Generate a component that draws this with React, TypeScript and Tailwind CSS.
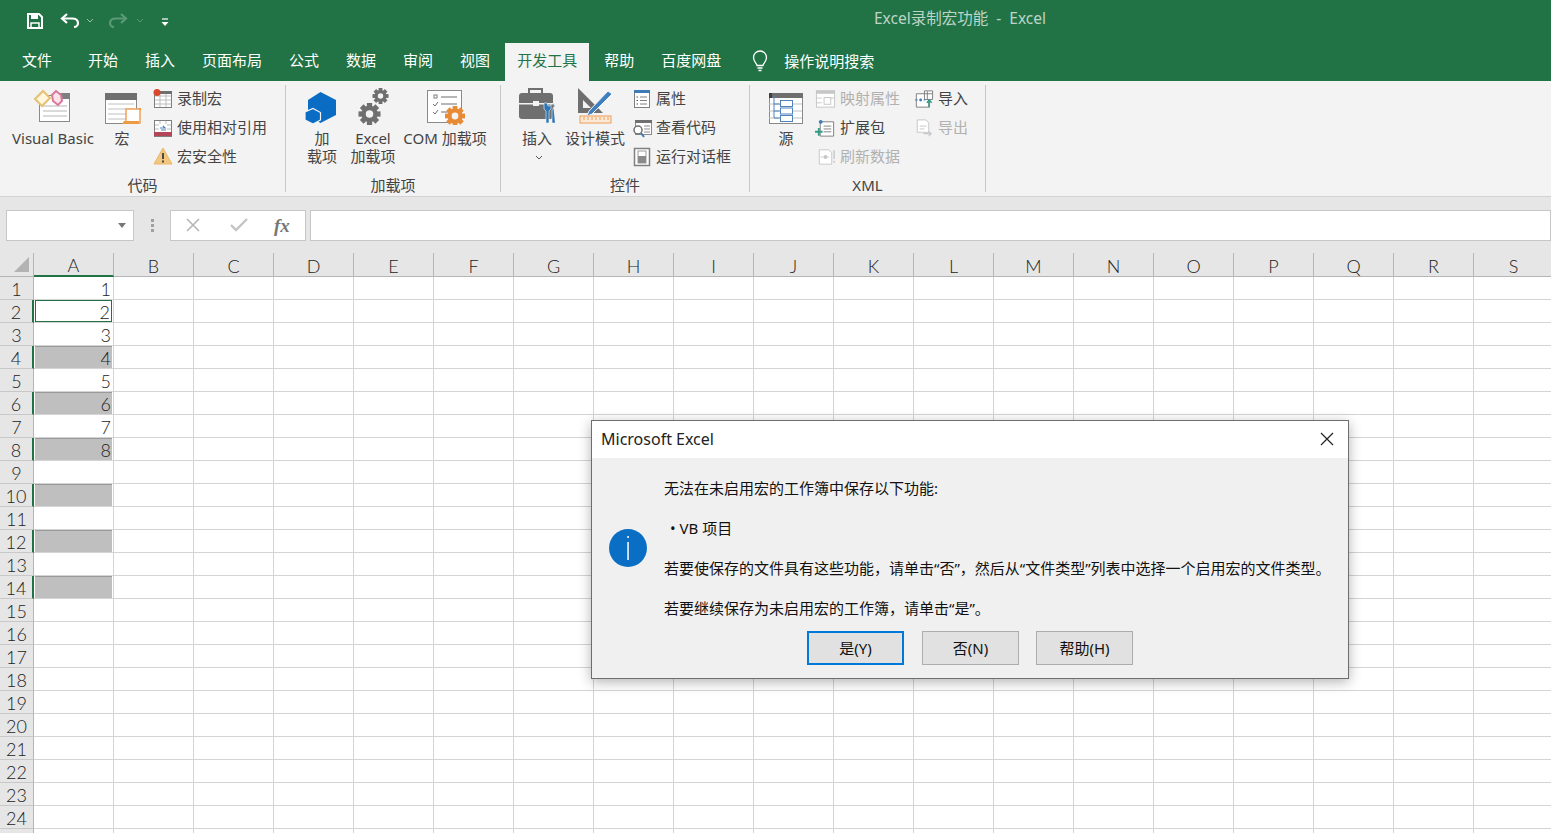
import React from 'react';

const tabs = ['开始', '插入', '页面布局', '公式', '数据', '审阅', '视图'];
const columns = 'ABCDEFGHIJKLMNOPQRS'.split('');
const rows = Array.from({ length: 25 }, (_, i) => i + 1);

const VisualBasicIcon = () => (
  <svg width="40" height="36" viewBox="0 0 40 36">
    <rect x="6.5" y="6.5" width="30" height="26" fill="#fff" stroke="#8a8a8a" />
    <rect x="23" y="4" width="14" height="6" fill="#7f7f7f" />
    <path d="M10 17h24M10 22h24M10 27h24" stroke="#b5b5b5" strokeWidth="1" />
    <path d="M2 10 10 2l7 7-8 8z" fill="#fff6dc" stroke="#e3c274" strokeWidth="2" />
    <path d="M19 6l4-4 5 4 1 6-4 4-5-4z" fill="#fbe3ea" stroke="#d9789b" strokeWidth="2" />
  </svg>
);

const MacroIcon = () => (
  <svg width="40" height="40" viewBox="-2 -7 40 40">
    <rect x="1.5" y="1.5" width="31" height="30" fill="#fff" stroke="#8a8a8a" />
    <rect x="1" y="1" width="32" height="7" fill="#6f6f6f" />
    <path d="M4 12h26M4 17h26M4 22h26M4 27h26" stroke="#c0c0c0" />
    <path d="M22 17h14v14H22z" fill="#fff" stroke="#f0a35a" strokeWidth="1.5" />
    <path d="M18 32h17v-3H20z" fill="#ed9a45" />
    <path d="M34 16h3v3z" fill="#ed9a45" />
  </svg>
);

const SmallSheet = ({ children }: { children?: React.ReactNode }) => (
  <svg width="20" height="20" viewBox="0 0 20 20">
    <rect x="1.5" y="2.5" width="17" height="16" fill="#fff" stroke="#7f7f7f" />
    <path d="M2 7h16M2 11h16M2 15h16M7 3v15M13 3v15" stroke="#bdbdbd" />
    {children}
  </svg>
);

const RecordIcon = () => (
  <SmallSheet>
    <rect x="1" y="2" width="18" height="3" fill="#6f6f6f" />
    <circle cx="4" cy="3.5" r="3.5" fill="#d9472b" />
  </SmallSheet>
);

const RelativeIcon = () => (
  <SmallSheet>
    <rect x="1" y="14" width="18" height="4" fill="#b4465a" />
    <rect x="6" y="6" width="8" height="8" fill="#fff" />
    <path d="M7 10h5l-2-2M13 12H8" stroke="#4f81bd" strokeWidth="1.2" fill="none" />
  </SmallSheet>
);

const WarnIcon = () => (
  <svg width="20" height="20" viewBox="0 0 20 20">
    <path d="M10 1 19 17H1z" fill="#f2c77f" stroke="#eab768" />
    <path d="M9 6h2v6H9zM9 13.5h2v2H9z" fill="#4a4a4a" />
  </svg>
);

const AddinIcon = () => (
  <svg width="34" height="34" viewBox="0 0 34 34">
    <path d="M15.5 1 31 9v15l-15.500 8L3 24V9z" fill="#0b6cc4" />
    <path d="M0 21l8-3.500 7.500 4V29L8 33l-8-4z" fill="#0b6cc4" stroke="#f3f3f3" strokeWidth="1.2" />
  </svg>
);

const Gear = ({ cx, cy, r, color }: { cx: number; cy: number; r: number; color: string }) => (
  <g>
    <circle cx={cx} cy={cy} r={r * 0.74} fill={color} />
    {[0, 45, 90, 135].map((a) => (
      <rect
        key={a}
        x={cx - r * 0.24}
        y={cy - r}
        width={r * 0.48}
        height={r * 2}
        fill={color}
        transform={`rotate(${a} ${cx} ${cy})`}
      />
    ))}
    <circle cx={cx} cy={cy} r={r * 0.34} fill="#f3f3f3" />
  </g>
);

const ExcelAddinIcon = () => (
  <svg width="34" height="38" viewBox="0 0 34 38">
    <Gear cx={24.5} cy={9} r={8} color="#6f6f6f" />
    <Gear cx={13.5} cy={27} r={11} color="#6f6f6f" />
  </svg>
);

const ComIcon = () => (
  <svg width="40" height="38" viewBox="0 0 40 38">
    <rect x="2.5" y="3.5" width="34" height="32" fill="#fff" stroke="#8a8a8a" />
    <rect x="9" y="8" width="3" height="3" fill="none" stroke="#7f7f7f" />
    <path d="M16 10h16M16 17h16M16 25h8M8 17l2 2 3-4M8 25l2 2 3-4" stroke="#6f6f6f" fill="none" />
    <Gear cx={30} cy={29} r={10} color="#e98a34" />
  </svg>
);

const InsertIcon = () => (
  <svg width="38" height="38" viewBox="0 0 38 38">
    <path d="M11 6V2h13v4" fill="none" stroke="#6f6f6f" strokeWidth="2" />
    <rect x="1" y="6" width="34" height="26" rx="3" fill="#6f6f6f" />
    <rect x="1" y="16" width="14" height="1.5" fill="#f3f3f3" />
    <rect x="21" y="16" width="14" height="1.5" fill="#f3f3f3" />
    <rect x="15" y="14" width="6" height="5" fill="#f3f3f3" />
    <path d="M26 16v6l2 2v12h3V24l2-2v-6l-1 3h-2l-1-3zM35 16l2 3-3 4v13h3" fill="#2e75b6" stroke="#f3f3f3" strokeWidth="0.6" />
  </svg>
);

const DesignIcon = () => (
  <svg width="38" height="38" viewBox="0 0 38 38">
    <path d="M2 1v25h25z" fill="#6f6f6f" />
    <path d="M7 13v8h8z" fill="#f3f3f3" />
    <path d="M13 24 32 4l4 3-20 20-5 2z" fill="#3e7fc1" stroke="#f3f3f3" strokeWidth="1" />
    <rect x="4" y="29" width="31" height="7" fill="#fbe9d7" stroke="#ee9c52" />
    <path d="M8 30v3M12 30v3M16 30v3M20 30v3M24 30v3M28 30v3M32 30v3" stroke="#ee9c52" />
  </svg>
);

const PropsIcon = () => (
  <svg width="20" height="20" viewBox="0 0 20 20">
    <rect x="2.5" y="1.5" width="15" height="17" fill="#fff" stroke="#7f7f7f" />
    <rect x="2" y="1" width="16" height="3" fill="#3f7cb5" />
    <path d="M8 8h7M8 11.5h7M8 15h7" stroke="#7f7f7f" />
    <path d="M4.5 8H6M4.5 11.5H6M4.5 15H6" stroke="#555" />
  </svg>
);

const ViewCodeIcon = () => (
  <svg width="20" height="20" viewBox="0 0 20 20">
    <rect x="3.5" y="2.5" width="16" height="14" fill="#fff" stroke="#8a8a8a" />
    <rect x="3" y="2" width="17" height="3" fill="#6f6f6f" />
    <path d="M12 8h6M12 11h6M12 14h6" stroke="#8a8a8a" />
    <circle cx="6" cy="12" r="4" fill="#fff" stroke="#6f6f6f" strokeWidth="1.5" />
    <path d="M9 15l3 4" stroke="#3f7cb5" strokeWidth="2" />
  </svg>
);

const DialogIcon = () => (
  <svg width="20" height="20" viewBox="0 0 20 20">
    <rect x="2.5" y="1.5" width="15" height="17" fill="#fff" stroke="#7f7f7f" strokeWidth="1.5" />
    <rect x="6" y="4" width="8" height="12" fill="#fff" stroke="#9a9a9a" />
    <rect x="6" y="9" width="8" height="7" fill="#8a8a8a" />
  </svg>
);

const SourceIcon = () => (
  <svg width="36" height="36" viewBox="0 -3 36 36">
    <rect x="1.5" y="1.5" width="33" height="30" fill="#fff" stroke="#8a8a8a" />
    <rect x="1" y="1" width="34" height="5" fill="#6f6f6f" />
    <rect x="1" y="1" width="3" height="5" fill="#3f3f3f" />
    <path d="M1 12h10M24 12h10M1 19h10M24 19h10M1 26h10M24 26h10" stroke="#c0c0c0" />
    <path d="M6 4v22h6M6 12h6M6 19h6" stroke="#4f81bd" fill="none" />
    <rect x="12.5" y="8.5" width="12" height="6" fill="#fff" stroke="#4f81bd" />
    <rect x="12.5" y="16" width="12" height="6" fill="#fff" stroke="#4f81bd" />
    <rect x="12.5" y="23.500" width="12" height="6" fill="#fff" stroke="#4f81bd" />
  </svg>
);

const XmlDocIcon = ({ disabled, kind }: { disabled?: boolean; kind: string }) => {
  const c = disabled ? '#c6c6c6' : '#7f7f7f';
  const blue = disabled ? '#c6c6c6' : '#3f7cb5';
  return (
    <svg width="22" height="20" viewBox="0 0 22 20">
      {kind === 'map' && (
        <>
          <rect x="1.5" y="1.5" width="19" height="17" fill="#fff" stroke={c} />
          <rect x="1" y="1" width="20" height="3.5" fill={c} />
          <path d="M2 9h5M2 14h5M15 9h5" stroke={c} />
          <rect x="9.5" y="8.5" width="7" height="7" fill="#fff" stroke={c} />
        </>
      )}
      {kind === 'import' && (
        <>
          <path d="M3.5 4.5h13v14h-13z" fill="#fff" stroke={c} />
          <path d="M12 1.5h8.500v9H12zM12 4.5h8M15 2v8" stroke={c} fill="#fff" />
          <circle cx="8" cy="11" r="1.5" fill={blue} />
          <path d="M2 11h3M11 11h2" stroke={blue} />
          <path d="M17 19v-7M14.5 14l2.500-3 2.500 3" stroke="#2f9e84" strokeWidth="1.5" fill="none" />
        </>
      )}
      {kind === 'pack' && (
        <>
          <path d="M5.5 3.5h14v15h-14z" fill="#fff" stroke={c} />
          <path d="M9 8h8M9 11h8M9 14h8" stroke={c} />
          <circle cx="6" cy="3.5" r="2" fill={blue} />
          <path d="M0 14h8M4 10v8" stroke="#2f9e84" strokeWidth="2" />
        </>
      )}
      {kind === 'export' && (
        <>
          <path d="M4.5 1.5h9l3 3v10h-12z" fill="#fff" stroke={c} />
          <path d="M7 8h7M7 11h5" stroke={c} />
          <path d="M11 16h8M16.5 13.5 19 16l-2.500 2.500" stroke={c} strokeWidth="1.3" fill="none" />
        </>
      )}
      {kind === 'refresh' && (
        <>
          <path d="M4.5 2.5h10l3 3v12h-13z" fill="#fff" stroke={c} />
          <circle cx="11" cy="10" r="2" fill={c} />
          <path d="M6 10h3M13 10h2" stroke={c} />
          <path d="M20 3v9M20 14v2" stroke={c} strokeWidth="1.5" />
        </>
      )}
    </svg>
  );
};

const BigButton = ({ icon, label, w }: { icon: React.ReactNode; label: React.ReactNode; w: string }) => (
  <div className={`flex flex-col items-center ${w}`}>
    <div className="flex h-[42px] items-end justify-center">{icon}</div>
    <div className="mt-[4px] text-center text-[15px] leading-[18px] text-[#444]">{label}</div>
  </div>
);

const SmallButton = ({ icon, label, disabled }: { icon: React.ReactNode; label: string; disabled?: boolean }) => (
  <div className={`flex h-[29px] items-center gap-[4px] whitespace-nowrap text-[15px] ${disabled ? 'text-[#b1b1b1]' : 'text-[#444]'}`}>
    <span className="flex w-[21px] justify-center">{icon}</span>
    {label}
  </div>
);

const RibbonGroup = ({ title, w, children }: { title: string; w: string; children: React.ReactNode }) => (
  <div className={`flex h-[107px] flex-col border-r border-[#c8c8c8] ${w}`}>
    <div className="-mt-[2px] flex h-[92px] shrink-0">{children}</div>
    <div className="shrink-0 text-center text-[15px] leading-[20px] text-[#444]">{title}</div>
  </div>
);

const Ribbon = () => (
  <div className="flex h-[116px] border-b border-[#d2d2d2] bg-[#f3f3f3] pt-[4px]">
    <RibbonGroup title="代码" w="w-[286px]">
      <BigButton w="w-[82px] ml-[12px]" icon={<VisualBasicIcon />} label="Visual Basic" />
      <BigButton w="w-[40px] ml-[8px]" icon={<MacroIcon />} label="宏" />
      <div className="ml-[10px] mt-[1px]">
        <SmallButton icon={<RecordIcon />} label="录制宏" />
        <SmallButton icon={<RelativeIcon />} label="使用相对引用" />
        <SmallButton icon={<WarnIcon />} label="宏安全性" />
      </div>
    </RibbonGroup>
    <RibbonGroup title="加载项" w="w-[215px]">
      <BigButton w="w-[30px] ml-[21px]" icon={<AddinIcon />} label={<>加<br />载项</>} />
      <BigButton w="w-[46px] ml-[13px]" icon={<ExcelAddinIcon />} label={<>Excel<br />加载项</>} />
      <BigButton w="w-[88px] ml-[5px] whitespace-nowrap" icon={<ComIcon />} label="COM 加载项" />
    </RibbonGroup>
    <RibbonGroup title="控件" w="w-[249px]">
      <BigButton
        w="w-[36px] ml-[18px]"
        icon={<InsertIcon />}
        label={
          <>
            插入
            <svg className="mx-auto mt-[8px] translate-x-[2px]" width="8" height="6" viewBox="0 0 8 6">
              <path d="M1 1l3 3 3-3" fill="none" stroke="#555" />
            </svg>
          </>
        }
      />
      <BigButton w="w-[62px] ml-[9px] whitespace-nowrap" icon={<DesignIcon />} label="设计模式" />
      <div className="ml-[5px] mt-[1px]">
        <SmallButton icon={<PropsIcon />} label="属性" />
        <SmallButton icon={<ViewCodeIcon />} label="查看代码" />
        <SmallButton icon={<DialogIcon />} label="运行对话框" />
      </div>
    </RibbonGroup>
    <RibbonGroup title="XML" w="w-[236px]">
      <BigButton w="w-[36px] ml-[18px]" icon={<SourceIcon />} label="源" />
      <div className="ml-[11px] mt-[1px] w-[96px]">
        <SmallButton disabled icon={<XmlDocIcon disabled kind="map" />} label="映射属性" />
        <SmallButton icon={<XmlDocIcon kind="pack" />} label="扩展包" />
        <SmallButton disabled icon={<XmlDocIcon disabled kind="refresh" />} label="刷新数据" />
      </div>
      <div className="ml-[2px] mt-[1px]">
        <SmallButton icon={<XmlDocIcon kind="import" />} label="导入" />
        <SmallButton disabled icon={<XmlDocIcon disabled kind="export" />} label="导出" />
      </div>
    </RibbonGroup>
  </div>
);

const TitleBar = () => (
  <div className="relative flex h-[43px] items-center bg-[#217346] pb-[2px] text-white">
    <svg className="ml-[26px]" width="18" height="18" viewBox="0 0 18 18">
      <path d="M2 2h11l3 3v11H2z" fill="none" stroke="#fff" strokeWidth="2" />
      <rect x="5" y="2" width="7" height="5" fill="#fff" />
      <rect x="5" y="11" width="8" height="5" fill="none" stroke="#fff" strokeWidth="1.5" />
    </svg>
    <svg className="ml-[16px]" width="20" height="18" viewBox="0 0 20 18">
      <path d="M7 2 2 6.5 7 11" fill="none" stroke="#fff" strokeWidth="2.2" />
      <path d="M3 6.5h9c4.500 0 6 2.500 6 4.500s-1.500 4-4 4" fill="none" stroke="#fff" strokeWidth="2.2" />
    </svg>
    <svg className="ml-[6px]" width="8" height="6" viewBox="0 0 8 6">
      <path d="M1 1l3 3 3-3" fill="none" stroke="#9cc4ad" />
    </svg>
    <svg className="ml-[14px]" width="20" height="18" viewBox="0 0 20 18">
      <path d="M13 2l5 4.500L13 11" fill="none" stroke="#5b9a77" strokeWidth="2.2" />
      <path d="M17 6.5H8C3.500 6.500 2 9 2 11s1.500 4 4 4" fill="none" stroke="#5b9a77" strokeWidth="2.2" />
    </svg>
    <svg className="ml-[8px]" width="8" height="6" viewBox="0 0 8 6">
      <path d="M1 1l3 3 3-3" fill="none" stroke="#5b9a77" />
    </svg>
    <svg className="ml-[17px] mt-[3px]" width="8" height="9" viewBox="0 0 8 9">
      <path d="M1 1h6" stroke="#fff" strokeWidth="1.2" />
      <path d="M0.5 4h7L4 8z" fill="#fff" />
    </svg>
    <div className="absolute left-[874px] top-[8px] whitespace-pre text-[15.5px] leading-[20px] text-[#bcd5c7]">Excel录制宏功能  -  Excel</div>
  </div>
);

const TabBar = () => (
  <div className="flex h-[38px] items-stretch gap-[3px] bg-[#217346] pl-[10px] text-[15px] text-white">
    <div className="mr-[9px] flex items-center px-[12px] pb-[4px]">文件</div>
    {tabs.map((t) => (
      <div key={t} className="flex items-center px-[12px] pb-[4px]">{t}</div>
    ))}
    <div className="flex items-center bg-[#f3f3f3] px-[12px] pb-[4px] text-[#217346]">开发工具</div>
    <div className="flex items-center px-[12px] pb-[4px]">帮助</div>
    <div className="flex items-center px-[12px] pb-[4px]">百度网盘</div>
    <div className="ml-[15px] flex items-center gap-[15px] pb-[2px]">
      <svg width="18" height="22" viewBox="0 0 18 22">
        <path d="M6 15.5c0-2-3.500-3.500-3.500-8a6.500 6.500 0 0 1 13 0c0 4.500-3.500 6-3.500 8z" fill="none" stroke="#fff" strokeWidth="1.3" />
        <path d="M6.5 18h5M7.5 20.5h3" stroke="#fff" strokeWidth="1.3" />
      </svg>
      操作说明搜索
    </div>
  </div>
);

const FormulaBar = () => (
  <div className="flex h-[56px] items-center gap-[4px] bg-[#e6e6e6] pl-[6px]">
    <div className="flex h-[31px] w-[128px] items-center justify-end border border-[#c6c6c6] bg-white pr-[7px]">
      <svg width="8" height="5" viewBox="0 0 8 5"><path d="M0 0h8L4 5z" fill="#777" /></svg>
    </div>
    <div className="flex w-[28px] flex-col items-center gap-[2px]">
      <span className="h-[3px] w-[3px] bg-[#a0a0a0]" />
      <span className="h-[3px] w-[3px] bg-[#a0a0a0]" />
      <span className="h-[3px] w-[3px] bg-[#a0a0a0]" />
    </div>
    <div className="flex h-[31px] w-[136px] items-center border border-[#c6c6c6] bg-white pl-[14px]">
      <svg width="16" height="16" viewBox="0 0 16 16"><path d="M2 2l12 12M14 2 2 14" stroke="#b5b5b5" strokeWidth="1.6" /></svg>
      <svg className="ml-[29px]" width="18" height="14" viewBox="0 0 18 14"><path d="M1 7l5 5L17 1" fill="none" stroke="#c4c4c4" strokeWidth="2.4" /></svg>
      <span className="ml-[26px] font-['Liberation_Serif',serif] text-[19px] font-bold italic leading-none text-[#777]">fx</span>
    </div>
    <div className="h-[31px] flex-1 border border-[#c6c6c6] bg-white" />
  </div>
);

const cellValue = (row: number) => (row <= 8 ? String(row) : '');
const isShaded = (row: number) => row >= 4 && row <= 14 && row % 2 === 0;
const isSelected = (row: number) => row === 2 || isShaded(row);

const Sheet = () => (
  <div className="font-['Lato','Noto_Sans_CJK_SC',sans-serif] text-[18px] font-light text-[#222]">
    <div className="flex h-[24px]">
      <div className="flex w-[34px] shrink-0 items-end justify-end border-b border-r border-[#b5b5b5] bg-[#e6e6e6] pb-[3px] pr-[3px]">
        <svg width="16" height="16" viewBox="0 0 16 16"><path d="M15 0v15H0z" fill="#b3b3b3" /></svg>
      </div>
      {columns.map((c, i) => (
        <div
          key={c}
          className={`flex w-[80px] shrink-0 items-center justify-center border-r border-[#b5b5b5] bg-[#e6e6e6] pt-[3px] ${
            i === 0 ? 'border-b-2 border-b-[#217346]' : 'border-b border-b-[#b5b5b5]'
          }`}
        >
          {c}
        </div>
      ))}
    </div>
    {rows.map((r) => (
      <div key={r} className="flex h-[23px]">
        <div
          className={`flex w-[34px] shrink-0 items-center justify-center border-b border-[#c8c8c8] bg-[#e6e6e6] pt-[2px] ${
            isSelected(r) ? 'border-r-2 border-r-[#217346]' : 'border-r border-r-[#b5b5b5]'
          }`}
        >
          {r === 25 ? '' : r}
        </div>
        {columns.map((c) =>
          c === 'A' ? (
            <div key={c} className="w-[80px] shrink-0 border-b border-r border-[#d4d4d4] bg-white">
              <div
                className={`flex h-[22px] items-center justify-end pr-[1px] pt-[2px] ${
                  r === 2
                    ? 'mx-[1px] border border-[#217346] bg-white'
                    : isShaded(r)
                      ? 'mx-[1px] border-t border-[#999] bg-[#bfbfbf]'
                      : 'mx-[1px]'
                }`}
              >
                {cellValue(r)}
              </div>
            </div>
          ) : (
            <div key={c} className="w-[80px] shrink-0 border-b border-r border-[#d4d4d4] bg-white" />
          ),
        )}
      </div>
    ))}
  </div>
);

const DialogButton = ({ label, primary }: { label: string; primary?: boolean }) => (
  <div
    className={`flex h-[34px] w-[97px] items-center justify-center bg-[#e1e1e1] text-[15px] text-[#111] ${
      primary ? 'border-2 border-[#0078d7]' : 'border border-[#adadad]'
    }`}
  >
    {label}
  </div>
);

const Dialog = () => (
  <div className="absolute left-[591px] top-[420px] flex h-[259px] w-[758px] flex-col border border-[#6e6e6e] bg-[#f0f0f0] shadow-[0_3px_12px_rgba(0,0,0,0.3)]">
    <div className="flex h-[37px] shrink-0 items-center justify-between bg-white pb-[1px] pl-[9px] pr-[14px] text-[16px] text-[#222]">
      Microsoft Excel
      <svg width="14" height="14" viewBox="0 0 14 14"><path d="M1 1l12 12M13 1 1 13" stroke="#222" strokeWidth="1.2" /></svg>
    </div>
    <div className="flex items-center pl-[17px]">
      <div className="mt-[9px] flex h-[38px] w-[38px] shrink-0 items-center justify-center rounded-full bg-[#0a6fc4]">
        <svg width="4" height="24" viewBox="0 0 4 24">
          <rect x="1.3" y="0" width="1.5" height="2" fill="#fff" />
          <rect x="1.3" y="6" width="1.5" height="18" fill="#fff" />
        </svg>
      </div>
      <div className="ml-[17px] pt-[10px] text-[15px] text-[#111]">
        <div className="flex h-[40px] items-center">无法在未启用宏的工作簿中保存以下功能:</div>
        <div className="flex h-[40px] items-center pl-[6px]">• VB 项目</div>
        <div className="flex h-[40px] items-center whitespace-nowrap">若要使保存的文件具有这些功能，请单击“否”，然后从“文件类型”列表中选择一个启用宏的文件类型。</div>
        <div className="flex h-[40px] items-center">若要继续保存为未启用宏的工作簿，请单击“是”。</div>
      </div>
    </div>
    <div className="mt-[3px] flex pl-[215px]">
      <DialogButton primary label="是(Y)" />
      <div className="ml-[18px]"><DialogButton label="否(N)" /></div>
      <div className="ml-[17px]"><DialogButton label="帮助(H)" /></div>
    </div>
  </div>
);

export default function App() {
  return (
    <div className="relative h-[833px] w-[1551px] overflow-hidden bg-white font-['Noto_Sans','Noto_Sans_CJK_SC',sans-serif]">
      <TitleBar />
      <TabBar />
      <Ribbon />
      <FormulaBar />
      <Sheet />
      <Dialog />
    </div>
  );
}
